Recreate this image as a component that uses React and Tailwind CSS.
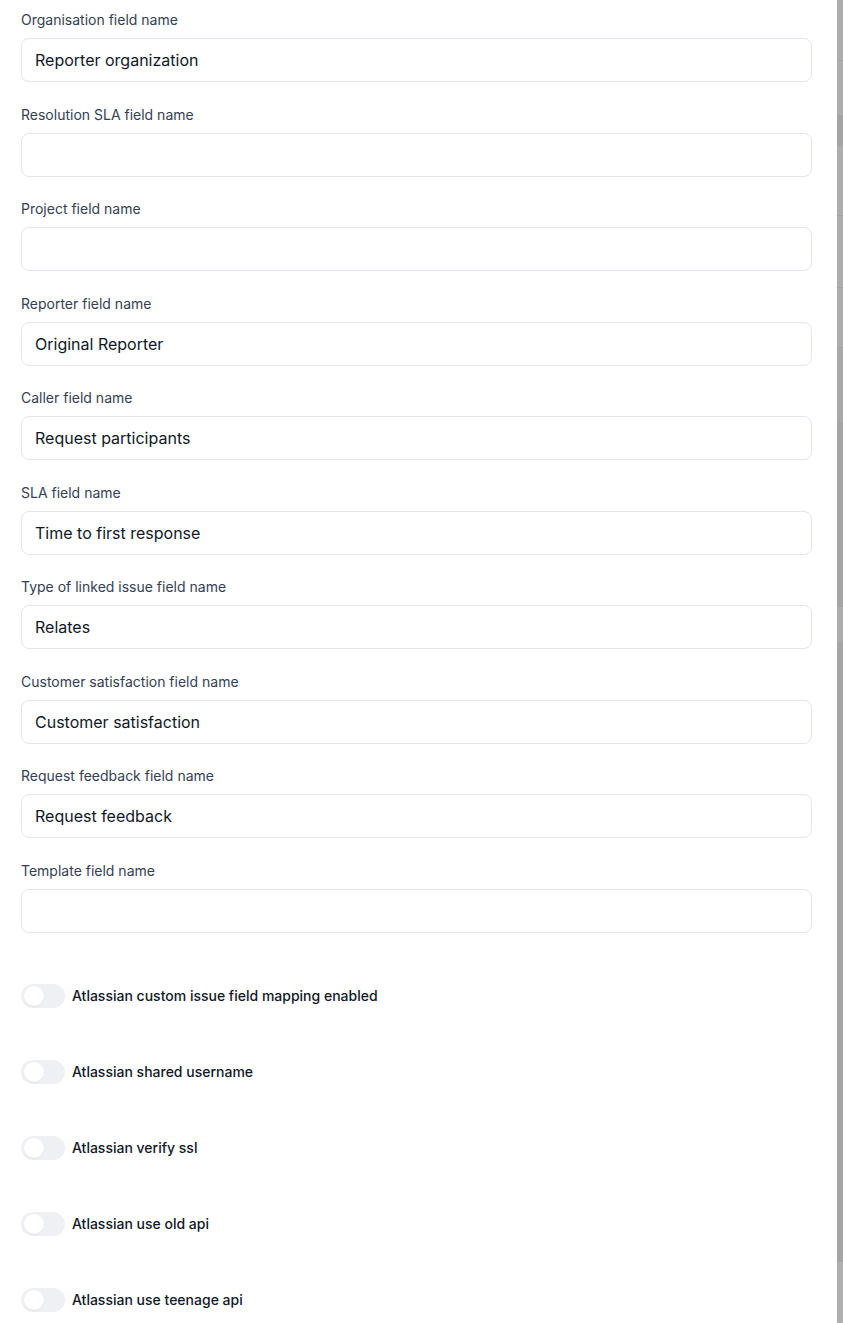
import React from 'react';

const fields = [
  { label: 'Organisation field name', value: 'Reporter organization' },
  { label: 'Resolution SLA field name', value: '' },
  { label: 'Project field name', value: '' },
  { label: 'Reporter field name', value: 'Original Reporter' },
  { label: 'Caller field name', value: 'Request participants' },
  { label: 'SLA field name', value: 'Time to first response' },
  { label: 'Type of linked issue field name', value: 'Relates' },
  { label: 'Customer satisfaction field name', value: 'Customer satisfaction' },
  { label: 'Request feedback field name', value: 'Request feedback' },
  { label: 'Template field name', value: '' },
];

const toggles = [
  'Atlassian custom issue field mapping enabled',
  'Atlassian shared username',
  'Atlassian verify ssl',
  'Atlassian use old api',
  'Atlassian use teenage api',
];

const Toggle = ({ label }) => (
  <label className="flex items-center h-6 cursor-pointer">
    <span className="relative w-11 h-6 rounded-full bg-[#eef0f3] shrink-0">
      <span className="absolute left-[3px] top-[2px] w-5 h-5 rounded-full bg-white shadow-[0_1px_2px_rgba(16,24,40,0.06)]"></span>
    </span>
    <span className="ml-[7px] text-[14px] font-medium text-[#111827]">{label}</span>
  </label>
);

export default function App() {
  return (
    <div className="flex w-[843px] h-[1323px] overflow-hidden bg-white" style={{ fontFamily: 'Inter, "Noto Sans", sans-serif' }}>
      <div className="flex-1 bg-white pl-[21px] pt-[10px] pr-[25px]">
        {/* Text fields */}
        <div className="flex flex-col gap-[22.5px]">
          {fields.map((f) => (
            <div key={f.label} className="flex flex-col">
              <label className="text-[14px] leading-5 font-normal text-[#344054]">{f.label}</label>
              <input
                type="text"
                defaultValue={f.value}
                className="mt-2 h-11 w-full rounded-lg border border-[#e4e5ee] bg-white px-[13px] text-[16px] text-[#101828] outline-none"
              />
            </div>
          ))}
        </div>

        {/* Switches */}
        <div className="mt-[51px] flex flex-col gap-[52px]">
          {toggles.map((t) => (
            <Toggle key={t} label={t} />
          ))}
        </div>
      </div>

      {/* Backdrop edge */}
      <div className="w-[6px] flex flex-col bg-[#adadad]">
        <div className="h-[61px] border-b border-[#a3a3a3]"></div>
        <div className="h-[54px]"></div>
        <div className="h-[31px] bg-[#a4a4a4]"></div>
        <div className="h-[70px] border-b border-[#a3a3a3]"></div>
        <div className="h-[72px] border-b border-[#a3a3a3]"></div>
        <div className="h-[60px] border-b border-[#a3a3a3]"></div>
        <div className="h-[74px] bg-[#a9a9a9]"></div>
        <div className="h-[185px] bg-[#a5a5a5]"></div>
        <div className="h-[35px] bg-[#adadad]"></div>
        <div className="h-[620px] bg-[#a5a5a5]"></div>
        <div className="flex-1 bg-[#b0b0b0]"></div>
      </div>
    </div>
  );
}
